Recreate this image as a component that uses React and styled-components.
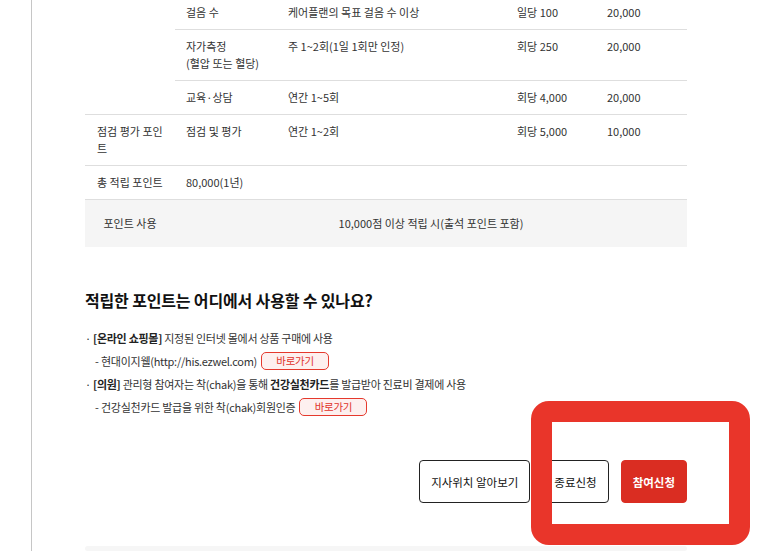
import React from 'react';
import styled, { createGlobalStyle } from 'styled-components';

const Global = createGlobalStyle`
  html, body { margin: 0; padding: 0; background: #fff; }
  body {
    font-family: "Noto Sans CJK KR", "Noto Sans", sans-serif;
    color: #333;
  }
  * { box-sizing: border-box; }
`;

const Page = styled.div`
  position: relative;
  display: flex;
  height: 551px;
  overflow: hidden;
`;

const Sidebar = styled.aside`
  flex: none;
  width: 32px;
  border-right: 1px solid #c6c6c6;
`;

const Main = styled.main`
  display: flex;
  flex-direction: column;
  padding-left: 53px;
  width: 655px;
`;

const Table = styled.table`
  width: 602px;
  margin-top: -4px;
  border-collapse: collapse;
  table-layout: fixed;
  font-size: 11px;
  line-height: 17px;
  letter-spacing: 0;
  color: #333;
`;

const Cell = styled.td`
  padding: 8px 4px 8px ${(p) => p.$pl ?? 12}px;
  vertical-align: top;
  text-align: left;
  border-bottom: 1px solid #dedede;
`;

const SummaryRow = styled.tr`
  background: #f5f5f5;
`;

const SummaryCell = styled.td`
  padding: 15px 4px;
  text-align: center;
  vertical-align: middle;
`;

const Heading = styled.h2`
  margin: 42px 0 0;
  font-size: 16px;
  line-height: 22px;
  font-weight: 700;
  letter-spacing: -0.01em;
  color: #111;
`;

const UsageList = styled.ul`
  list-style: none;
  margin: 15px 0 0;
  padding: 0;
  font-size: 11px;
  letter-spacing: -0.025em;
  color: #333;
`;

const UsageItem = styled.li`
  display: flex;
  align-items: center;
  height: 23px;
  padding-left: ${(p) => (p.$sub ? 10 : 0)}px;
  &::before {
    content: '${(p) => (p.$sub ? '-' : '·')}';
    flex: none;
    width: ${(p) => (p.$sub ? 6 : 8)}px;
  }
`;

const Strong = styled.b`
  font-weight: 700;
  color: #222;
`;

const GoButton = styled.a`
  display: inline-flex;
  align-items: center;
  justify-content: center;
  width: 68px;
  height: 18px;
  margin-left: 4px;
  border: 1px solid #e5392d;
  border-radius: 5px;
  background: #fdf0ef;
  color: #e0322a;
  font-size: 10.5px;
  text-decoration: none;
`;

const ButtonRow = styled.div`
  display: flex;
  justify-content: flex-end;
  gap: 12px;
  margin-top: 42px;
`;

const ActionButton = styled.button`
  height: 43px;
  padding: 0 11px;
  border-radius: 4px;
  font-family: inherit;
  font-size: 11.5px;
  letter-spacing: 0;
  font-weight: ${(p) => (p.$primary ? 700 : 400)};
  color: ${(p) => (p.$primary ? '#fff' : '#111')};
  background: ${(p) => (p.$primary ? '#da2d22' : '#fff')};
  border: 1px solid ${(p) => (p.$primary ? '#da2d22' : '#222')};
  cursor: pointer;
`;

const NextSection = styled.section`
  margin-top: 43px;
  height: 80px;
  width: 602px;
  border-radius: 10px;
  background: #f6f6f6;
`;

const Highlight = styled.div`
  position: absolute;
  left: 531px;
  top: 401px;
  width: 219px;
  height: 144px;
  border: 21px solid #e9352a;
  border-radius: 18px;
  pointer-events: none;
`;

const rows = [
  { item: '걸음 수', cond: '케어플랜의 목표 걸음 수 이상', unit: '일당 100', max: '20,000' },
  { item: <>자가측정<br />(혈압 또는 혈당)</>, cond: '주 1~2회(1일 1회만 인정)', unit: '회당 250', max: '20,000' },
  { item: '교육·상담', cond: '연간 1~5회', unit: '회당 4,000', max: '20,000' },
];

export default function App() {
  return (
    <>
      <Global />
      <Page>
        <Sidebar />
        <Main>
          <Table>
            <colgroup>
              <col style={{ width: 90 }} />
              <col style={{ width: 101 }} />
              <col style={{ width: 229 }} />
              <col style={{ width: 90 }} />
              <col style={{ width: 92 }} />
            </colgroup>
            <tbody>
              {rows.map((r, i) => (
                <tr key={i}>
                  {i === 0 && <Cell rowSpan={3} />}
                  <Cell $pl={11}>{r.item}</Cell>
                  <Cell>{r.cond}</Cell>
                  <Cell>{r.unit}</Cell>
                  <Cell>{r.max}</Cell>
                </tr>
              ))}
              <tr>
                <Cell>점검 평가 포인트</Cell>
                <Cell $pl={11}>점검 및 평가</Cell>
                <Cell>연간 1~2회</Cell>
                <Cell>회당 5,000</Cell>
                <Cell>10,000</Cell>
              </tr>
              <tr>
                <Cell>총 적립 포인트</Cell>
                <Cell $pl={11} colSpan={4}>80,000(1년)</Cell>
              </tr>
              <SummaryRow>
                <SummaryCell>포인트 사용</SummaryCell>
                <SummaryCell colSpan={4}>10,000점 이상 적립 시(출석 포인트 포함)</SummaryCell>
              </SummaryRow>
            </tbody>
          </Table>

          <Heading>적립한 포인트는 어디에서 사용할 수 있나요?</Heading>

          <UsageList>
            <UsageItem>
              <span><Strong>[온라인 쇼핑몰]</Strong> 지정된 인터넷 몰에서 상품 구매에 사용</span>
            </UsageItem>
            <UsageItem $sub>
              <span>현대이지웰(http://his.ezwel.com)</span>
              <GoButton href="#">바로가기</GoButton>
            </UsageItem>
            <UsageItem>
              <span><Strong>[의원]</Strong> 관리형 참여자는 착(chak)을 통해 <Strong>건강실천카드</Strong>를 발급받아 진료비 결제에 사용</span>
            </UsageItem>
            <UsageItem $sub>
              <span>건강실천카드 발급을 위한 착(chak)회원인증</span>
              <GoButton href="#">바로가기</GoButton>
            </UsageItem>
          </UsageList>

          <ButtonRow>
            <ActionButton>지사위치 알아보기</ActionButton>
            <ActionButton>종료신청</ActionButton>
            <ActionButton $primary>참여신청</ActionButton>
          </ButtonRow>

          <NextSection />
        </Main>
        <Highlight />
      </Page>
    </>
  );
}
